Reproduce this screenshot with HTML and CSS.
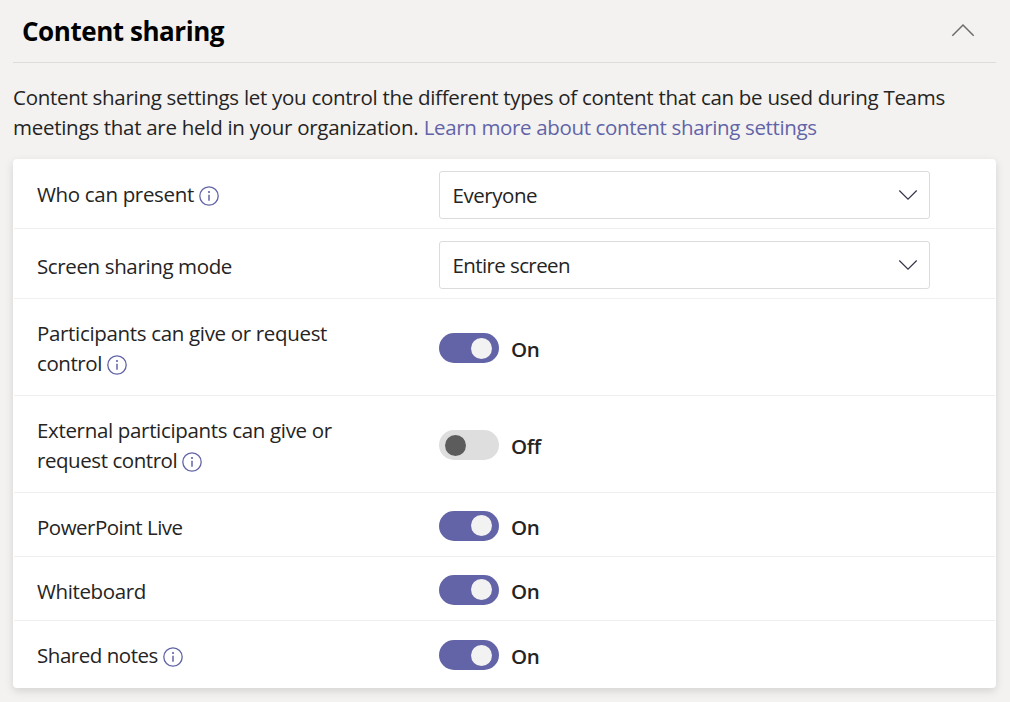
FILE: index.html
```html
<!DOCTYPE html>
<html lang="en">
<head>
<meta charset="utf-8">
<title>Content sharing</title>
<link rel="stylesheet" href="styles.css">
</head>
<body>
<svg class="symbols" aria-hidden="true">
  <symbol id="info" viewBox="0 0 20 20">
    <circle cx="10" cy="10" r="9.2" fill="none" stroke="currentColor" stroke-width="1.3"/>
    <path d="M10 8.7v6" fill="none" stroke="currentColor" stroke-width="1.5"/>
    <circle cx="10" cy="6" r="1.1" fill="currentColor"/>
  </symbol>
  <symbol id="down" viewBox="0 0 20 12">
    <path d="M1.3 1.5L10 10.2l8.7-8.7" fill="none" stroke="currentColor" stroke-width="1.2"/>
  </symbol>
</svg>
<main class="panel">
  <header class="panel-header">
    <h1 class="title">Content sharing</h1>
    <svg class="collapse" viewBox="0 0 24 14"><path d="M1.3 12.7L12 2l10.7 10.7" fill="none" stroke="currentColor" stroke-width="1.5"/></svg>
  </header>
  <p class="intro"><span class="intro-a">Content sharing settings let you control the different types of content that can be used during Teams</span><br><span class="intro-b">meetings that are held in your organization.</span> <a class="link">Learn more about content sharing settings</a></p>
  <section class="card">
    <div class="row row-select">
      <div class="label"><span class="t-who">Who can present</span><svg class="info"><use href="#info"/></svg></div>
      <div class="select"><span class="t-everyone">Everyone</span><svg class="chevron"><use href="#down"/></svg></div>
    </div>
    <div class="row row-select">
      <div class="label label-mode"><span class="t-mode">Screen sharing mode</span></div>
      <div class="select"><span class="t-entire">Entire screen</span><svg class="chevron"><use href="#down"/></svg></div>
    </div>
    <div class="row row-tall">
      <div class="label"><span class="t-part">Participants can give or request</span><br><span class="t-control">control</span><svg class="info"><use href="#info"/></svg></div>
      <div class="control"><span class="toggle on"></span><span class="state">On</span></div>
    </div>
    <div class="row row-tall">
      <div class="label"><span class="t-ext">External participants can give or</span><br><span class="t-request">request control</span><svg class="info"><use href="#info"/></svg></div>
      <div class="control"><span class="toggle"></span><span class="state">Off</span></div>
    </div>
    <div class="row row-short">
      <div class="label"><span class="t-ppt">PowerPoint Live</span></div>
      <div class="control"><span class="toggle on raised"></span><span class="state">On</span></div>
    </div>
    <div class="row row-short">
      <div class="label"><span class="t-board">Whiteboard</span></div>
      <div class="control"><span class="toggle on raised"></span><span class="state">On</span></div>
    </div>
    <div class="row row-last">
      <div class="label"><span class="t-notes">Shared notes</span><svg class="info"><use href="#info"/></svg></div>
      <div class="control"><span class="toggle on"></span><span class="state">On</span></div>
    </div>
  </section>
</main>
</body>
</html>
```
FILE: styles.css
```css
* { box-sizing: border-box; }
body {
  margin: 0;
  height: 702px;
  overflow: hidden;
  background: #f3f2f1;
  color: #252423;
  font: 20.5px/30px "Open Sans", "Noto Sans", sans-serif;
  white-space: nowrap;
}
.symbols { display: none; }
.panel { padding: 0 14px 0 13px; }
.panel-header {
  display: flex;
  align-items: center;
  justify-content: space-between;
  height: 63px;
  padding: 0 21px 0 9px;
  border-bottom: 1px solid #dddcdb;
}
.title {
  margin: 0;
  color: #000;
  font-size: 26px;
  font-weight: 700;
  letter-spacing: -.45px;
}
.collapse { width: 24px; height: 14px; margin-bottom: 2px; color: #6b6a69; }
.intro { margin: 0; padding: 19px 0 0; height: 96px; }
.intro-a { letter-spacing: -.285px; }
.intro-b { letter-spacing: -.28px; }
.link { color: #6264a7; letter-spacing: -.35px; }
.card {
  height: 529px;
  background: #fff;
  border-radius: 4px;
  box-shadow: 0 3px 9px rgba(0, 0, 0, .13);
}
.row {
  display: grid;
  grid-template-columns: 402px 1fr;
  align-items: start;
  margin: 0 1px;
  padding: 0 65px 0 23px;
  border-bottom: 1px solid #f0efee;
}
.row-select { height: 70px; padding-top: 12px; }
.row-select .label { padding-top: 8px; }
.row-select .label-mode { padding-top: 10px; }
.row-tall { height: 97px; padding-top: 19px; }
.row-tall .control { padding-top: 15px; }
.row-short { height: 64px; padding-top: 18px; }
.row-short .label { padding-top: 1px; }
.row-last { height: 67px; padding-top: 19px; border-bottom: 0; }
.t-who { letter-spacing: -.33px; }
.t-mode { letter-spacing: -.37px; }
.t-part { letter-spacing: -.33px; }
.t-control { letter-spacing: -.42px; }
.t-ext { letter-spacing: -.33px; }
.t-request { letter-spacing: -.44px; }
.t-ppt { letter-spacing: -.5px; }
.t-board { letter-spacing: -.38px; }
.t-notes { letter-spacing: -.46px; }
.t-everyone { letter-spacing: -.45px; }
.t-entire { letter-spacing: -.6px; }
.info {
  width: 20px;
  height: 20px;
  margin-left: 5px;
  vertical-align: -4px;
  color: #6264a7;
}
.select {
  display: flex;
  align-items: center;
  justify-content: space-between;
  width: 491px;
  height: 48px;
  padding: 0 11px 0 12.5px;
  border: 1px solid #dcdcde;
  border-radius: 3px;
}
.select span { padding-bottom: 1px; }
.chevron { width: 20px; height: 12px; color: #33344a; }
.control { display: flex; gap: 12px; }
.toggle {
  display: flex;
  align-items: center;
  width: 60px;
  height: 30px;
  padding: 0 7px 0 6px;
  border-radius: 15px;
  background: #dedede;
}
.toggle::before {
  content: "";
  width: 21px;
  height: 21px;
  border-radius: 50%;
  background: #5c5c5c;
}
.toggle.on { justify-content: flex-end; background: #6264a7; }
.toggle.on::before { background: #f3f2f3; }
.toggle.raised { padding-bottom: 1px; }
.state { height: 30px; padding-top: 1px; font-weight: 600; letter-spacing: -.4px; }
```
